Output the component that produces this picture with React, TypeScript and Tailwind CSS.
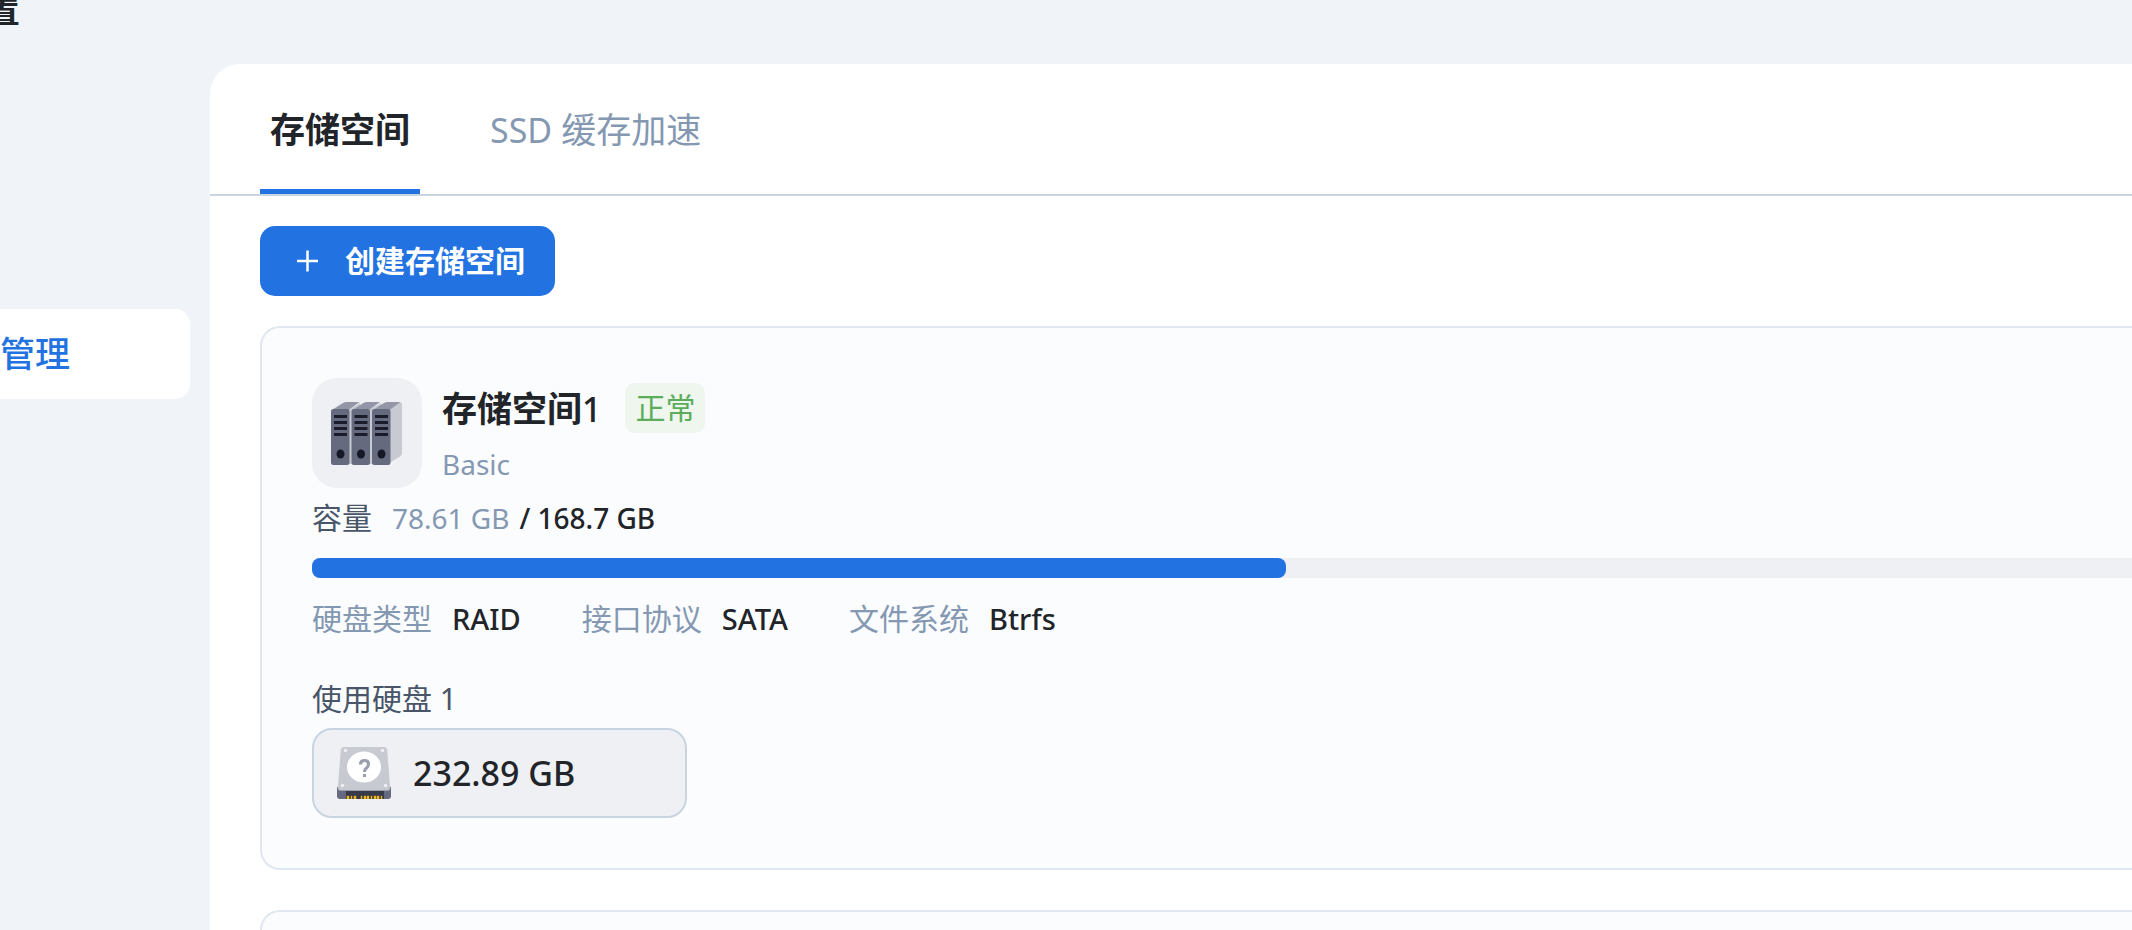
const SPECS = [
  { label: "硬盘类型", value: "RAID" },
  { label: "接口协议", value: "SATA" },
  { label: "文件系统", value: "Btrfs" },
]

const USED_PERCENT = 53.5

const ServerIcon = () => (
  <svg width="72" height="63" viewBox="0 0 72 63" aria-hidden="true">
    <path d="M55 8 68.500 0.500Q71 0 71 2.500V51Q71 53 69 54.500L55 63Z" fill="#c8cad2" />
    <path d="M17 8 29 1V8L22 12V62H17ZM37 8 50 1V8L43 12V62H37Z" fill="#c8cad2" />
    {[0, 20.5, 41].map((x) => (
      <g key={x} transform={`translate(${x} 0)`}>
        <path d="M1 8 11.500 1.300Q13.500 0 16 0H28.500L17.500 8Z" fill="#9296a6" />
        <rect x="0" y="7" width="18.500" height="56" rx="2.500" fill="#666a7e" />
        <path d="M3 13h13v3H3zM3 19h13v3H3zM3 25h13v3H3zM3 31h13v3H3z" fill="#1a1c2b" />
        <ellipse cx="9.500" cy="52" rx="4" ry="4.500" fill="#161827" />
      </g>
    ))}
  </svg>
)

const DiskIcon = () => (
  <svg width="54" height="52" viewBox="0 0 54 52" aria-hidden="true">
    <path d="M0 40H54V49Q54 52 51 52H3Q0 52 0 49Z" fill="#666a7e" />
    <path d="M9 44H47V52H9Z" fill="#373a49" />
    <path
      d="M10 49h2v3h-2zM14 49h1v3h-1zM17 49h2v3h-2zM24 49h1v3h-1zM27 49h2v3h-2zM30 49h2v3h-2zM34 49h1v3h-1zM37 49h2v3h-2zM40 49h2v3h-2zM44 49h1v3h-1z"
      fill="#f9b916"
      stroke="#f9b916"
      strokeWidth="0.4"
    />
    <path d="M1 39 53 39 53.500 41Q53.500 44 50.500 44H3.500Q0.500 44 0.500 41Z" fill="#9b9eae" />
    <path d="M7 0H47Q50 0 50.200 3L53 39Q53.500 43 50 43H4Q0.500 43 1 39L3.800 3Q4 0 7 0Z" fill="#c8cad2" />
    <ellipse cx="27" cy="20" rx="17" ry="15.500" fill="#fff" />
    <g fill="#eff0f4">
      <circle cx="8.500" cy="3.500" r="1.700" />
      <circle cx="45.500" cy="3.500" r="1.700" />
      <circle cx="5.500" cy="38.500" r="1.700" />
      <circle cx="48.500" cy="38.500" r="1.700" />
    </g>
    <path d="M23.500 17.500Q23.500 13.500 27.500 13.500Q31.500 13.500 31.500 17Q31.500 19.500 29.500 21Q27.500 22.300 27.500 25" fill="none" stroke="#9b9eae" strokeWidth="3.200" />
    <path d="M26 27h3v3h-3z" fill="#9b9eae" />
  </svg>
)

export default function App() {
  return (
    <div className="flex h-screen overflow-hidden bg-[#f0f4f9] font-['Noto_Sans','Noto_Sans_CJK_SC',sans-serif] text-[30px] leading-[40px] text-[#212529]">
      <aside className="w-[210px] shrink-0">
        <h1 className="-mt-4 -ml-[15px] h-[50px] text-[35px] leading-[52px] font-semibold">置</h1>
        <nav className="mt-[275px] mr-5">
          <a href="#manage" className="flex h-[90px] items-center rounded-r-[15px] bg-white text-[35px] font-medium text-[#2273e1]">
            管理
          </a>
        </nav>
      </aside>

      <main className="mt-16 min-w-0 flex-1 rounded-tl-[30px] bg-white">
        <div role="tablist" className="flex h-[132px] gap-[60px] border-b-2 border-[#c9d4e1] pl-[50px] text-[35px]">
          <button role="tab" aria-selected="true" className="border-b-[5px] border-[#2273e1] px-[10px] pt-[6px] font-semibold">
            存储空间
          </button>
          <button role="tab" aria-selected="false" className="px-[10px] pt-[2px] text-[#8498b2]">
            <span className="text-[34px]">SSD</span> 缓存加速
          </button>
        </div>

        <div className="flex flex-col items-start pt-[30px] pl-[50px]">
          <button className="flex h-[70px] items-center gap-5 rounded-[15px] bg-[#2273e1] px-[30px] font-bold text-white">
            <svg width="35" height="35" viewBox="0 0 35 35" aria-hidden="true">
              <path d="M7 17H28M17.500 6.500V27.500" stroke="currentColor" strokeWidth="2.500" />
            </svg>
            创建存储空间
          </button>

          <section className="mt-[30px] h-[544px] w-full rounded-l-[20px] border-2 border-r-0 border-[#e0e7f0] bg-[#fbfcfe] py-[50px] pl-[50px]">
            <div className="flex gap-5">
              <div className="flex size-[110px] items-center justify-center rounded-[25px] bg-[#eff0f4]">
                <ServerIcon />
              </div>
              <div>
                <div className="flex h-[60px] items-center gap-6">
                  <h2 className="pt-[2px] text-[35px] font-semibold">
                    存储空间<span className="text-[34px] font-medium">1</span>
                  </h2>
                  <span className="flex h-[50px] items-center rounded-[10px] bg-[#eef6ee] px-[10px] text-[#5bad5b]">正常</span>
                </div>
                <p className="mt-[6px] text-[28px] text-[#8498b2]">Basic</p>
              </div>
            </div>

            <div className="mt-[10px] flex h-10 items-center text-[28px]">
              <span className="mr-5 text-[30px] text-[#495569]">容量</span>
              <span className="mr-[10px] text-[#8498b2]">78.61 GB</span>
              <span className="font-medium">/ 168.7 GB</span>
            </div>
            <div className="mt-5 h-5 rounded-l-lg bg-[#eff0f4]">
              <div className="h-5 rounded-lg bg-[#2273e1]" style={{ width: `${USED_PERCENT}%` }} />
            </div>

            <dl className="mt-[21px] flex gap-[61px]">
              {SPECS.map((spec) => (
                <div key={spec.label} className="flex gap-5">
                  <dt className="text-[#8498b2]">{spec.label}</dt>
                  <dd className="text-[29px] font-medium">{spec.value}</dd>
                </div>
              ))}
            </dl>

            <p className="mt-10 text-[#495569]">使用硬盘 1</p>
            <button className="mt-[9px] flex h-[90px] w-[375px] items-center gap-[22px] rounded-[20px] border-2 border-[#c9d4e1] bg-[#eff0f4] px-[23px] text-[34px] font-medium">
              <DiskIcon />
              232.89 GB
            </button>
          </section>

          <section className="mt-10 h-[544px] w-full rounded-l-[20px] border-2 border-r-0 border-[#e0e7f0] bg-[#fbfcfe]" />
        </div>
      </main>
    </div>
  )
}
